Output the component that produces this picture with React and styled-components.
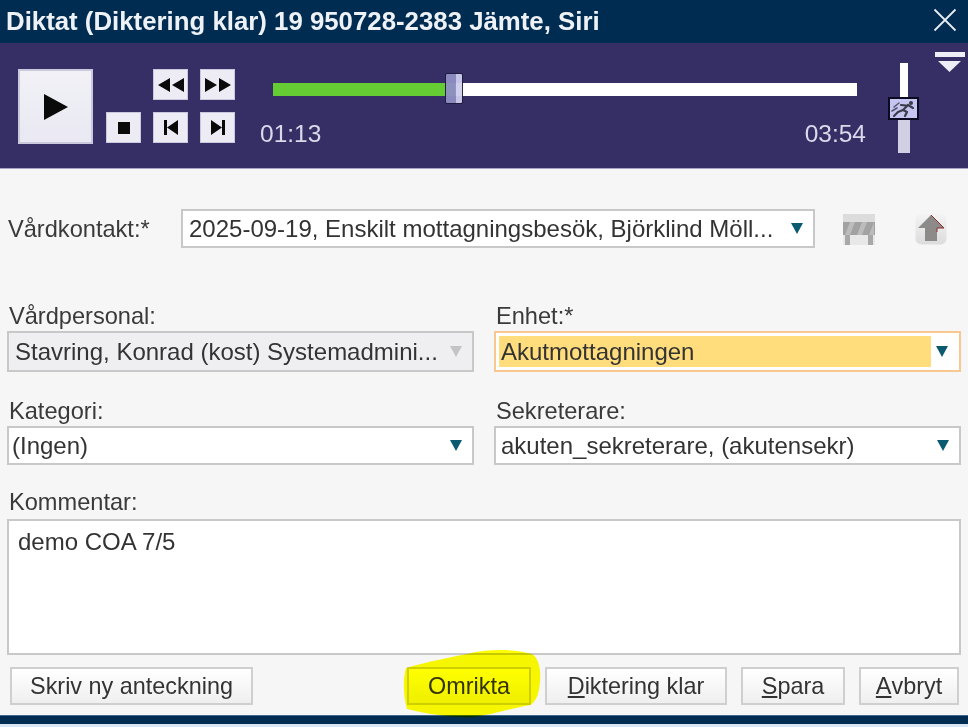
import React from "react";
import styled, { createGlobalStyle } from "styled-components";

const Global = createGlobalStyle`
  html, body { margin: 0; padding: 0; background: #dbe6f4; }
  body { font-family: "Liberation Sans", Arial, sans-serif; overflow: hidden; }
`;

const Window = styled.div`
  width: 968px;
  height: 727px;
  display: flex;
  flex-direction: column;
  position: relative;
  overflow: hidden;
`;

const TitleBar = styled.div`
  height: 43px;
  flex: none;
  background: #002c52;
  color: #eef2f6;
  display: flex;
  align-items: center;
  justify-content: space-between;
  padding: 0 11px 0 6px;
  font-size: 25.8px;
  font-weight: bold;
`;

const CloseIcon = styled.svg`
  margin-bottom: 4px;
`;

const Player = styled.div`
  height: 126px;
  box-sizing: border-box;
  flex: none;
  border-bottom: 1px solid #a9a5c6;
  background: #362f66;
  display: flex;
  align-items: flex-start;
  padding: 26px 0 0 18px;
  position: relative;
`;

const PlayButton = styled.div`
  width: 75px;
  height: 75px;
  flex: none;
  box-sizing: border-box;
  border: 2px solid #c9c8dc;
  background: linear-gradient(#f1f1f6, #e9e8f3);
  display: flex;
  align-items: center;
  justify-content: center;
`;

const Transport = styled.div`
  margin-left: 13px;
  display: grid;
  grid-template-columns: repeat(3, 35px);
  grid-template-rows: repeat(2, 31px);
  gap: 12px;
  flex: none;
`;

const TransportButton = styled.div`
  grid-column: ${(p) => p.$col};
  grid-row: ${(p) => p.$row};
  box-sizing: border-box;
  border: 1px solid #c9c8dc;
  background: #edecf4;
  display: flex;
  align-items: center;
  justify-content: center;
`;

const Timeline = styled.div`
  margin-left: 25px;
  width: 606px;
  flex: none;
  display: flex;
  flex-direction: column;
`;

const Track = styled.div`
  margin: 14px 9px 0 13px;
  height: 13px;
  background: #fff;
  position: relative;
`;

const Progress = styled.div`
  height: 100%;
  background: #66cc33;
`;

const Thumb = styled.div`
  position: absolute;
  top: -10px;
  box-sizing: border-box;
  width: 18px;
  height: 31px;
  border: 1px solid #1f1b3e;
  border-radius: 2px;
  background: linear-gradient(90deg, #8f8fc4 65%, #cfcfee 65%);
  opacity: 0.95;
`;

const Times = styled.div`
  margin-top: 25px;
  display: flex;
  justify-content: space-between;
  color: #d9d9ea;
  font-size: 24.5px;
  line-height: 26px;
`;

const SpeedSlider = styled.div`
  margin: -6px 0 0 22px;
  width: 31px;
  height: 90px;
  flex: none;
  display: flex;
  flex-direction: column;
  align-items: center;
  position: relative;
`;

const SpeedUpper = styled.div`
  width: 8px;
  height: 40px;
  background: #fff;
`;

const SpeedLower = styled.div`
  width: 12px;
  flex: 1;
  background: #d0cfe3;
`;

const SpeedThumb = styled.div`
  position: absolute;
  top: 34px;
  left: 0;
  width: 31px;
  height: 23px;
  box-sizing: border-box;
  border: 2px solid #0c0a20;
  background: #c6c5f2;
  display: flex;
  align-items: center;
  justify-content: center;
`;

const Collapse = styled.svg`
  position: absolute;
  right: 3px;
  top: 9px;
`;

const Form = styled.div`
  flex: 1;
  background: #f6f6f6;
  padding: 40px 7px 0;
  display: flex;
  flex-direction: column;
`;

const ContactRow = styled.div`
  display: flex;
  align-items: center;
`;

const Label = styled.div`
  color: #3a3a3a;
  font-size: 23.6px;
  line-height: 22px;
`;

const ContactLabel = styled(Label)`
  width: 174px;
  padding-left: 1px;
  box-sizing: border-box;
  flex: none;
`;

const Select = styled.div`
  box-sizing: border-box;
  height: ${(p) => p.$height || 39}px;
  width: ${(p) => (p.$width ? `${p.$width}px` : "100%")};
  flex: none;
  border: 2px solid ${(p) => (p.$active ? "#f9c890" : "#c8c8c8")};
  background: ${(p) => (p.$disabled ? "#efeff1" : "#fff")};
  color: #333;
  font-size: 24px;
  display: flex;
  align-items: ${(p) => (p.$active ? "stretch" : "center")};
  padding: ${(p) => (p.$active ? "3px 0 3px 3px" : `0 0 0 ${p.$pad || 5}px`)};
`;

const SelectText = styled.div`
  flex: 1;
  min-width: 0;
  white-space: nowrap;
  overflow: hidden;
  background: ${(p) => (p.$active ? "#ffdc7c" : "transparent")};
  display: flex;
  align-items: center;
  padding-left: ${(p) => (p.$active ? "2px" : "0")};
`;

const Arrow = styled.div`
  width: 0;
  height: 0;
  flex: none;
  align-self: center;
  margin: 0 ${(p) => (p.$active ? 11 : 10)}px 0 ${(p) => (p.$active ? 5 : 9)}px;
  border-left: 6px solid transparent;
  border-right: 6px solid transparent;
  border-top: 11px solid ${(p) => (p.$disabled ? "#c4c4c8" : "#0b5a70")};
`;

const IconSlot = styled.div`
  margin-left: ${(p) => p.$gap}px;
  flex: none;
  display: flex;
`;

const Fields = styled.div`
  margin-top: 57px;
  display: grid;
  grid-template-columns: 467px 467px;
  column-gap: 20px;
  row-gap: 28px;
`;

const Field = styled.div`
  display: flex;
  flex-direction: column;
  gap: ${(p) => p.$gap || 4}px;
  ${Label} { padding-left: 2px; }
`;

const CommentField = styled(Field)`
  margin-top: 26px;
`;

const Comment = styled.div`
  height: 136px;
  box-sizing: border-box;
  border: 2px solid #c8c8c8;
  background: #fff;
  padding: 7px 9px;
  color: #333;
  font-size: 24px;
  line-height: 28px;
`;

const Buttons = styled.div`
  margin-top: 12px;
  padding: 0 2px 0 3px;
  display: flex;
  gap: 14px;
`;

const Button = styled.div`
  height: 38px;
  width: ${(p) => p.$width}px;
  box-sizing: border-box;
  border: 2px solid #cfcfcf;
  background: linear-gradient(#ffffff, #efefef);
  color: #333;
  font-size: 23.4px;
  display: flex;
  align-items: center;
  justify-content: center;
  margin-left: ${(p) => p.$push || 0}px;
`;

const Highlight = styled.svg`
  position: absolute;
  left: 400px;
  top: 648px;
  mix-blend-mode: multiply;
  pointer-events: none;
`;

const BottomBar = styled.div`
  flex: none;
  height: 8px;
  background: #002c52;
  border-top: 1px solid #3f6a8d;
  margin-bottom: 3px;
`;

const Glyph = ({ d, w, h }) => (
  <svg width={w} height={h} viewBox={`0 0 ${w} ${h}`}>
    <path d={d} fill="#0a0a0a" />
  </svg>
);

const App = () => (
  <Window>
    <Global />
    <TitleBar>
      <span>Diktat (Diktering klar) 19 950728-2383 Jämte, Siri</span>
      <CloseIcon width="24" height="24" viewBox="0 0 24 24">
        <path d="M1.5 1.5 L22.5 22.5 M22.5 1.5 L1.5 22.5" stroke="#e8edf2" strokeWidth="1.8" />
      </CloseIcon>
    </TitleBar>
    <Player>
      <PlayButton>
        <svg width="26" height="28" viewBox="0 0 26 28">
          <path d="M1 1 L25 14 L1 27 Z" fill="#0a0a0a" />
        </svg>
      </PlayButton>
      <Transport>
        <TransportButton $col={2} $row={1}>
          <Glyph w={26} h={14} d="M0 7 L12 0 V14 Z M14 7 L26 0 V14 Z" />
        </TransportButton>
        <TransportButton $col={3} $row={1}>
          <Glyph w={26} h={14} d="M0 0 L12 7 L0 14 Z M14 0 L26 7 L14 14 Z" />
        </TransportButton>
        <TransportButton $col={1} $row={2}>
          <Glyph w={12} h={12} d="M0 0 H12 V12 H0 Z" />
        </TransportButton>
        <TransportButton $col={2} $row={2}>
          <Glyph w={14} h={15} d="M0 0 H3 V15 H0 Z M3 7.5 L14 0 V15 Z" />
        </TransportButton>
        <TransportButton $col={3} $row={2}>
          <Glyph w={14} h={15} d="M0 0 L11 7.5 L0 15 Z M11 0 H14 V15 H11 Z" />
        </TransportButton>
      </Transport>
      <Timeline>
        <Track>
          <Progress style={{ width: `${(73 / 234) * 100}%` }} />
          <Thumb style={{ left: `${(172 / 584) * 100}%` }} />
        </Track>
        <Times>
          <span>01:13</span>
          <span>03:54</span>
        </Times>
      </Timeline>
      <SpeedSlider>
        <SpeedUpper />
        <SpeedLower />
        <SpeedThumb>
          <svg width="27" height="19" viewBox="0 0 27 19" fill="none" stroke="#3c3c48" strokeWidth="2.2" strokeLinecap="round" strokeLinejoin="round">
            <circle cx="21" cy="4" r="2" fill="#3c3c48" stroke="none" />
            <path d="M18 6 L13 11 M18 6 L23 9 M16 6.5 L11 6 M13 11 L17 13 L15 17 M13 11 L8 13 L4 17" />
            <path d="M4 8 L9 4 M2 12 L7 9" strokeWidth="1.6" stroke="#56566a" />
          </svg>
        </SpeedThumb>
      </SpeedSlider>
      <Collapse width="30" height="20" viewBox="0 0 30 20">
        <rect x="0" y="0" width="30" height="5" fill="#eeeef6" />
        <path d="M3 9 H26 L14.5 20 Z" fill="#eeeef6" />
      </Collapse>
    </Player>
    <Form>
      <ContactRow>
        <ContactLabel>Vårdkontakt:*</ContactLabel>
        <Select $width={634} $pad={6}>
          <SelectText>2025-09-19, Enskilt mottagningsbesök, Björklind Möll...</SelectText>
          <Arrow />
        </Select>
        <IconSlot $gap={27}>
          <svg width="34" height="32" viewBox="0 0 34 32">
            <rect x="1" y="1" width="32" height="8" fill="#dcdcdc" />
            <rect x="1" y="9" width="32" height="13" fill="#a2a2a2" />
            <path d="M8 9 L3 22 H8 L13 9 Z M20 9 L15 22 H20 L25 9 Z M32 9 L27 22 H32 Z" fill="#bcbcbc" />
            <rect x="1" y="22" width="32" height="10" fill="#e8e8e8" />
            <rect x="3" y="22" width="5" height="10" fill="#a8a8a8" />
            <rect x="26" y="22" width="5" height="10" fill="#a8a8a8" />
          </svg>
        </IconSlot>
        <IconSlot $gap={39}>
          <svg width="32" height="32" viewBox="0 0 32 32">
            <defs>
              <linearGradient id="arrowBg" x1="0" y1="0" x2="0" y2="1">
                <stop offset="0" stopColor="#f4f4f4" />
                <stop offset="1" stopColor="#dcdcdc" />
              </linearGradient>
            </defs>
            <rect x="0.5" y="0.5" width="31" height="31" rx="6" fill="url(#arrowBg)" />
            <path d="M16 2 L29 15 H22 V28 H10 V15 H3 Z" fill="#8e8a8a" />
            <path d="M16 2 L29 15 H22 V19" fill="none" stroke="#8a3030" strokeWidth="1" />
          </svg>
        </IconSlot>
      </ContactRow>
      <Fields>
        <Field>
          <Label>Vårdpersonal:</Label>
          <Select $height={41} $disabled $pad={6}>
            <SelectText>Stavring, Konrad (kost) Systemadmini...</SelectText>
            <Arrow $disabled />
          </Select>
        </Field>
        <Field>
          <Label>Enhet:*</Label>
          <Select $height={41} $active>
            <SelectText $active>Akutmottagningen</SelectText>
            <Arrow $active />
          </Select>
        </Field>
        <Field>
          <Label>Kategori:</Label>
          <Select $pad={3}>
            <SelectText>(Ingen)</SelectText>
            <Arrow />
          </Select>
        </Field>
        <Field>
          <Label>Sekreterare:</Label>
          <Select>
            <SelectText>akuten_sekreterare, (akutensekr)</SelectText>
            <Arrow />
          </Select>
        </Field>
      </Fields>
      <CommentField $gap={6}>
        <Label>Kommentar:</Label>
        <Comment>demo COA 7/5</Comment>
      </CommentField>
      <Buttons>
        <Button $width={243}>Skriv ny anteckning</Button>
        <Button $width={124} $push={140}>Omrikta</Button>
        <Button $width={182}><u>D</u>iktering klar</Button>
        <Button $width={104}><u>S</u>para</Button>
        <Button $width={100}><u>A</u>vbryt</Button>
      </Buttons>
    </Form>
    <BottomBar />
    <Highlight width="146" height="72" viewBox="0 0 146 72">
      <path
        d="M6 20 C26 14 52 9 76 4 C92 1 116 1 132 6 C139 10 141 22 140 34 C139 46 136 54 130 57 C112 60 92 67 74 69 C58 70 30 67 7 61 C3 48 3 30 6 20 Z"
        fill="#ffff00"
      />
    </Highlight>
  </Window>
);

export default App;
